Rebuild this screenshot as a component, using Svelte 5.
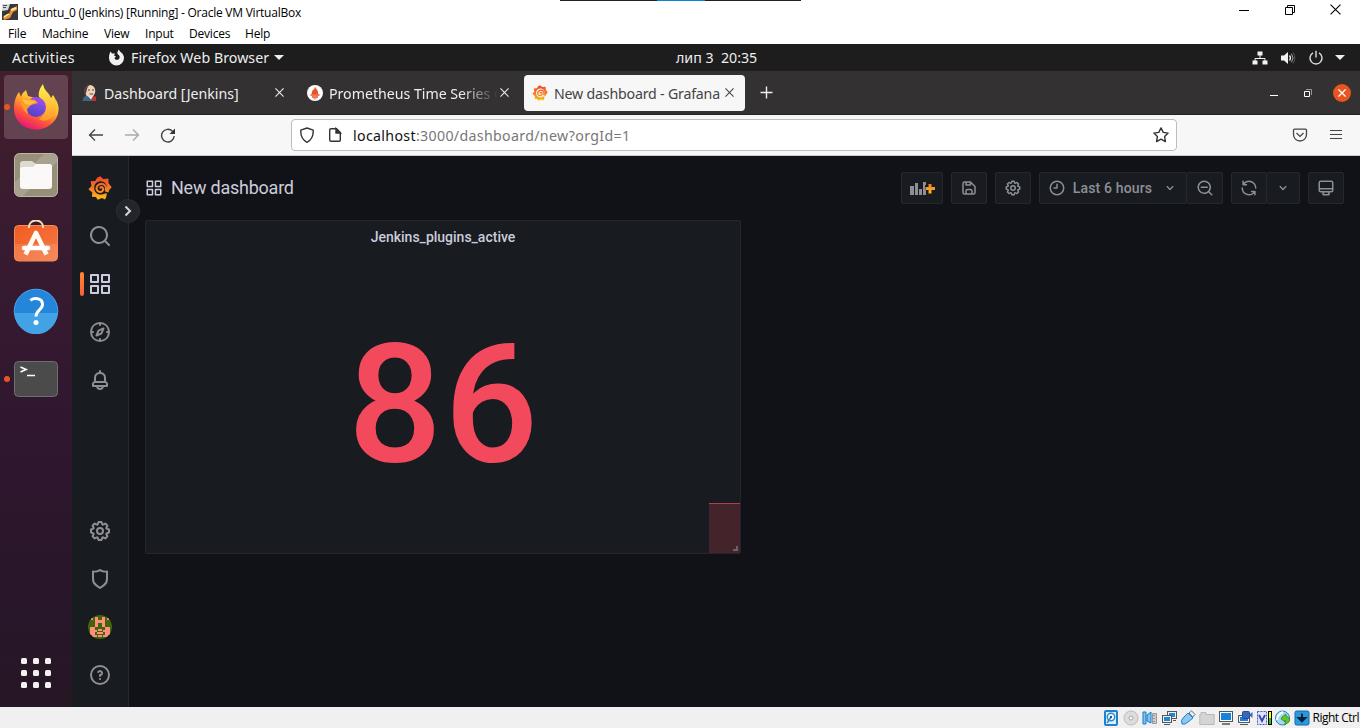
<script>
  const P = {
    search: 'M21.71,20.29,18,16.61A9,9,0,1,0,16.61,18l3.68,3.68a1,1,0,0,0,1.42,0A1,1,0,0,0,21.71,20.29ZM11,18a7,7,0,1,1,7-7A7,7,0,0,1,11,18Z',
    apps: 'M10,13H3a1,1,0,0,0-1,1v7a1,1,0,0,0,1,1h7a1,1,0,0,0,1-1V14A1,1,0,0,0,10,13ZM9,20H4V15H9ZM21,2H14a1,1,0,0,0-1,1v7a1,1,0,0,0,1,1h7a1,1,0,0,0,1-1V3A1,1,0,0,0,21,2ZM20,9H15V4h5Zm1,4H14a1,1,0,0,0-1,1v7a1,1,0,0,0,1,1h7a1,1,0,0,0,1-1V14A1,1,0,0,0,21,13Zm-1,7H15V15h5ZM10,2H3A1,1,0,0,0,2,3v7a1,1,0,0,0,1,1h7a1,1,0,0,0,1-1V3A1,1,0,0,0,10,2ZM9,9H4V4H9Z',
    compass: 'M12,2A10,10,0,1,0,22,12,10,10,0,0,0,12,2Zm1,17.93V19a1,1,0,0,0-2,0v.93A8,8,0,0,1,4.07,13H5a1,1,0,0,0,0-2H4.07A8,8,0,0,1,11,4.07V5a1,1,0,0,0,2,0V4.07A8,8,0,0,1,19.93,11H19a1,1,0,0,0,0,2h.93A8,8,0,0,1,13,19.93ZM15.14,7.55l-5,2.12a1,1,0,0,0-.52.52l-2.12,5a1,1,0,0,0,.21,1.1,1,1,0,0,0,.7.3.93.93,0,0,0,.4-.09l5-2.12a1,1,0,0,0,.52-.52l2.12-5a1,1,0,0,0-1.31-1.31Zm-2.49,5.1-2.28,1,1-2.28,2.28-1Z',
    bell: 'M18,13.18V10a6,6,0,0,0-5-5.91V3a1,1,0,0,0-2,0V4.09A6,6,0,0,0,6,10v3.18A3,3,0,0,0,4,16v2a1,1,0,0,0,1,1H8.14a4,4,0,0,0,7.72,0H19a1,1,0,0,0,1-1V16A3,3,0,0,0,18,13.18ZM8,10a4,4,0,0,1,8,0v3H8Zm4,10a2,2,0,0,1-1.72-1h3.44A2,2,0,0,1,12,20Zm6-3H6V16a1,1,0,0,1,1-1H17a1,1,0,0,1,1,1Z',
    cog: 'M21.32,9.55l-1.89-.63.89-1.78A1,1,0,0,0,20.13,6L18,3.87a1,1,0,0,0-1.15-.19l-1.78.89-.63-1.89A1,1,0,0,0,13.5,2h-3a1,1,0,0,0-.95.68L8.92,4.57,7.14,3.68A1,1,0,0,0,6,3.87L3.87,6a1,1,0,0,0-.19,1.15l.89,1.78-1.89.63A1,1,0,0,0,2,10.5v3a1,1,0,0,0,.68.95l1.89.63-.89,1.78A1,1,0,0,0,3.87,18L6,20.13a1,1,0,0,0,1.15.19l1.78-.89.63,1.89a1,1,0,0,0,.95.68h3a1,1,0,0,0,.95-.68l.63-1.89,1.78.89A1,1,0,0,0,18,20.13L20.13,18a1,1,0,0,0,.19-1.15l-.89-1.78,1.89-.63A1,1,0,0,0,22,13.5v-3A1,1,0,0,0,21.32,9.55ZM20,12.78l-1.2.4A2,2,0,0,0,17.64,16l.57,1.14-1.1,1.1L16,17.64a2,2,0,0,0-2.79,1.16l-.4,1.2H11.22l-.4-1.2A2,2,0,0,0,8,17.64l-1.14.57-1.1-1.1L6.36,16A2,2,0,0,0,5.2,13.18L4,12.78V11.22l1.2-.4A2,2,0,0,0,6.36,8L5.79,6.89l1.1-1.1L8,6.36A2,2,0,0,0,10.82,5.2l.4-1.2h1.56l.4,1.2A2,2,0,0,0,16,6.36l1.14-.57,1.1,1.1L17.64,8a2,2,0,0,0,1.16,2.79l1.2.4ZM12,8a4,4,0,1,0,4,4A4,4,0,0,0,12,8Zm0,6a2,2,0,1,1,2-2A2,2,0,0,1,12,14Z',
    shield: 'M19.63,3.65a1,1,0,0,0-.84-.2,8,8,0,0,1-6.22-1.27,1,1,0,0,0-1.14,0A8,8,0,0,1,5.21,3.45a1,1,0,0,0-.84.2A1,1,0,0,0,4,4.43v7.45a9,9,0,0,0,3.77,7.33l3.65,2.6a1,1,0,0,0,1.16,0l3.65-2.6A9,9,0,0,0,20,11.88V4.43A1,1,0,0,0,19.63,3.65ZM18,11.88a7,7,0,0,1-2.93,5.7L12,19.77,8.93,17.58A7,7,0,0,1,6,11.88V5.58a10,10,0,0,0,6-1.39,10,10,0,0,0,6,1.39Z',
    help: 'M11.29,15.29a1.58,1.58,0,0,0-.12.15.76.76,0,0,0-.09.18.64.64,0,0,0-.06.18,1.36,1.36,0,0,0,0,.2.84.84,0,0,0,.08.38.9.9,0,0,0,.54.54.94.94,0,0,0,.76,0,.9.9,0,0,0,.54-.54A1,1,0,0,0,13,16a1,1,0,0,0-.29-.71A1,1,0,0,0,11.29,15.29ZM12,2A10,10,0,1,0,22,12,10,10,0,0,0,12,2Zm0,18a8,8,0,1,1,8-8A8,8,0,0,1,12,20ZM12,7A3,3,0,0,0,9.4,8.5a1,1,0,1,0,1.73,1A1,1,0,0,1,12,9a1,1,0,0,1,0,2,1,1,0,0,0-1,1v1a1,1,0,0,0,2,0v-.18A3,3,0,0,0,12,7Z',
    save: 'M20.71,9.29l-6-6a1,1,0,0,0-.32-.21A1.09,1.09,0,0,0,14,3H6A3,3,0,0,0,3,6V18a3,3,0,0,0,3,3H18a3,3,0,0,0,3-3V10A1,1,0,0,0,20.71,9.29ZM9,5h4V7H9Zm6,14H9V16a1,1,0,0,1,1-1h4a1,1,0,0,1,1,1Zm4-1a1,1,0,0,1-1,1H17V16a3,3,0,0,0-3-3H10a3,3,0,0,0-3,3v3H6a1,1,0,0,1-1-1V6A1,1,0,0,1,6,5H7V8A1,1,0,0,0,8,9h6a1,1,0,0,0,1-1V6.41l4,4Z',
    clock: 'M12,2A10,10,0,1,0,22,12,10,10,0,0,0,12,2Zm0,18a8,8,0,1,1,8-8A8,8,0,0,1,12,20ZM12,6a1,1,0,0,0-1,1v4H8a1,1,0,0,0,0,2h4a1,1,0,0,0,1-1V7A1,1,0,0,0,12,6Z',
    down: 'M17,9.17a1,1,0,0,0-1.41,0L12,12.71,8.46,9.17a1,1,0,0,0-1.41,0,1,1,0,0,0,0,1.42l4.24,4.24a1,1,0,0,0,1.42,0L17,10.59A1,1,0,0,0,17,9.17Z',
    zoomout: 'M21.71,20.29,18,16.61A9,9,0,1,0,16.61,18l3.68,3.68a1,1,0,0,0,1.42,0A1,1,0,0,0,21.71,20.29ZM11,18a7,7,0,1,1,7-7A7,7,0,0,1,11,18ZM15,10H7a1,1,0,0,0,0,2h8a1,1,0,0,0,0-2Z',
    sync: 'M19.91,15.51H15.38a1,1,0,0,0,0,2h2.4A8,8,0,0,1,4,12a1,1,0,0,0-2,0,10,10,0,0,0,16.88,7.23V21a1,1,0,0,0,2,0V16.5A1,1,0,0,0,19.91,15.51ZM12,2A10,10,0,0,0,5.12,4.77V3a1,1,0,0,0-2,0V7.5a1,1,0,0,0,1,1h4.5a1,1,0,0,0,0-2H6.22A8,8,0,0,1,20,12a1,1,0,0,0,2,0A10,10,0,0,0,12,2Z',
    monitor: 'M19,2H5A3,3,0,0,0,2,5V15a3,3,0,0,0,3,3H7.64l-.58,1a2,2,0,0,0,0,2,2,2,0,0,0,1.75,1h6.46A2,2,0,0,0,17,21a2,2,0,0,0,0-2l-.59-1H19a3,3,0,0,0,3-3V5A3,3,0,0,0,19,2ZM8.77,20,10,18H14l1.2,2ZM20,15a1,1,0,0,1-1,1H5a1,1,0,0,1-1-1V14H20Zm0-3H4V5A1,1,0,0,1,5,4H19a1,1,0,0,1,1,1Z'
  };
  const dots = [0, 1, 2, 3, 4, 5, 6, 7, 8];
</script>

{#snippet icon(d, size)}
  <svg width={size} height={size} viewBox="0 0 24 24" fill="currentColor"><path {d} /></svg>
{/snippet}

{#snippet grafana(size)}
  <svg width={size} height={size} viewBox="0 0 24 24">
    <defs><linearGradient id="gg{size}" gradientUnits="userSpaceOnUse" x1="12" y1="0" x2="12" y2="24"><stop offset="0.1" stop-color="#f04e28" /><stop offset="0.55" stop-color="#f67f25" /><stop offset="1" stop-color="#fcc40f" /></linearGradient></defs>
    <path fill="url(#gg{size})" d="M12.3.3 15.2 3.1 20.4 2.5 20.6 7.2 23.7 11.2 21 14.2 20.5 16.4 17.5 15.4C20 12.200 19 7.600 15.600 5.900 11.500 3.900 6.600 6.400 6.200 11.200 5.800 15.900 9.500 19.200 14 18.500L18.600 17 18.700 19.500 17.100 23.400 13.900 21.900 9.700 23.800 8 20.900 3.900 20.700 4.300 16.500.400 13.200 3.500 10.100 2.600 5.300 7.300 5 9.100 1.800Z" />
    <path fill="none" stroke="url(#gg{size})" stroke-width="2.100" stroke-linecap="round" d="M17.8 14.500C19 10.500 16.300 7.800 13.200 7.900 9.800 8 7.900 11 8.800 13.700 9.700 16.500 13.700 16.800 15 14.200 16 12.100 13.800 10.300 12.300 11.600" />
  </svg>
{/snippet}

{#snippet cross(size, w)}
  <svg width={size} height={size} viewBox="0 0 10 10" fill="none" stroke="currentColor" stroke-width={w}><path d="M.5.5 9.500 9.500M9.500.5.5 9.500" /></svg>
{/snippet}

<div class="screen">
  <div class="titlebar">
    <svg width="16" height="16" viewBox="0 0 16 16"><rect width="16" height="16" fill="#35383c" /><path d="M0 0H8L6 6 0 7Z" fill="#d8d8d8" /><path d="M1 1.500H5M1 3.500H4" stroke="#34536d" /><path d="M1 13 6 12 9 5 15 2V6L11 8 8 14 2 16Z" fill="#ef8e23" /><path d="M2 13 7 10M9 6 14 4" stroke="#ffe2a0" stroke-width="2" /></svg>
    <span class="title">Ubuntu_0 (Jenkins) [Running] - Oracle VM VirtualBox</span>
    <div class="minibar"><i></i></div>
    <div class="wincontrols">
      <svg width="12" height="12" viewBox="0 0 12 12" stroke="#000"><path d="M1 6.500H11" /></svg>
      <svg width="12" height="12" viewBox="0 0 12 12" stroke="#000" fill="none"><path d="M1.500 3.500h7v7h-7zM3.500 3.500v-2h7v7h-2" /></svg>
      {@render cross(11, 1)}
    </div>
  </div>
  <div class="menubar">
    <span>File</span><span>Machine</span><span>View</span><span>Input</span><span>Devices</span><span>Help</span>
  </div>

  <div class="topbar">
    <span class="act">Activities</span>
    <svg class="fxmono" width="17" height="17" viewBox="0 0 17 17"><path fill="#f1f1f1" d="M8.500 16.500A7.500 7.500 0 0 1 1 9C1 6.500 1.500 4.500 2.500 2.500L4 4.500 7 4.500 6 6.500 8 7.500 6.500 9C7 11 9.500 11.500 11 10 12.500 8 11.500 6 9.500 5 9 3 10 1.500 11 .5 11.500 3 13 3 14 4 15.500 6 16 7.500 16 9A7.500 7.500 0 0 1 8.500 16.500Z" /></svg>
    <span class="app">Firefox Web Browser</span>
    <i class="tri"></i>
    <span class="clock">лип 3&nbsp; 20:35</span>
    <div class="tray">
      <svg width="16" height="16" viewBox="0 0 16 16" fill="#f2f2f2"><path d="M5.500 1.500h5v4h-5zM.5 10.500h5v4h-5zM10.500 10.500h5v4h-5z" /><path d="M8 5v3M3 11V8.500h10V11" fill="none" stroke="#f2f2f2" /></svg>
      <svg width="16" height="16" viewBox="0 0 16 16"><path d="M1 5.500H4L8 2V14L4 10.500H1Z" fill="#f2f2f2" /><path d="M9.500 5.500Q11.500 8 9.500 10.500" stroke="#f2f2f2" fill="none" stroke-width="1.300" /><path d="M11.500 3.800Q14.500 8 11.500 12.200" stroke="#aaa" fill="none" /><path d="M13.200 2.500Q16.500 8 13.200 13.500" stroke="#555" fill="none" /></svg>
      <svg width="16" height="16" viewBox="0 0 16 16" fill="none" stroke="#ddd" stroke-width="1.400"><path d="M8 .8V7.500M5 2.800A6 6 0 1 0 11 2.800" /></svg>
      <i class="tri"></i>
    </div>
  </div>

  <div class="desktop">
    <div class="dock">
      <div class="slot active">
        <i class="run"></i>
        <svg width="48" height="48" viewBox="0 0 48 48">
          <defs>
            <linearGradient id="fa" x1=".8" y1=".1" x2=".3" y2="1"><stop offset="0" stop-color="#fff04a" /><stop offset=".35" stop-color="#ffb52e" /><stop offset=".65" stop-color="#ff5a36" /><stop offset="1" stop-color="#e8117c" /></linearGradient>
            <linearGradient id="fb" x1=".8" y1="0" x2=".4" y2="1"><stop offset="0" stop-color="#a850f0" /><stop offset="1" stop-color="#4b42c8" /></linearGradient>
            <linearGradient id="fc" x1="0" y1="0" x2="0" y2="1"><stop offset="0" stop-color="#fff44f" /><stop offset="1" stop-color="#ff9a2a" /></linearGradient>
          </defs>
          <path fill="url(#fa)" d="M24 46.500C11 46.500 2 37 2 25.500 2 18 4 13 7 9L9 14C10 10 12 9 14 7L16 13 27 16 44 17C46 21 47 24 46.500 27 46 38 36 46.500 24 46.500Z" />
          <path fill="url(#fc)" d="M27 14C26 9 28 5 31 1 32 8 37 9 39 15L41 12C46 19 46 26 42 32 38 38 31 39 27 36 34 32 36 24 31 18Z" />
          <circle cx="24" cy="24" r="10" fill="url(#fb)" />
          <path fill="#ff9b2a" d="M8 15 14 15.500 23 17 26 20 19 22 15 26 16 31C11 28 9 22 8 15Z" />
          <path fill="#ffc043" d="M10 16 24 18.500 18 22 13 21Z" />
        </svg>
      </div>
      <div class="slot">
        <svg width="46" height="46" viewBox="0 0 46 46"><rect x="1.500" y="1.500" width="43" height="43" rx="5" fill="#979079" stroke="#bdb8a4" /><path d="M2 30 31 2H40A4 4 0 0 1 44 6V10L10 44H6A4 4 0 0 1 2 40Z" fill="#a7a28f" /><path d="M7 12Q7 9 10 9H19L23 12H36Q39 12 39 15V18H7Z" fill="#dedacf" /><path d="M7 18Q7 15 10 15H20L23 12H36Q39 12 39 15V34Q39 37 36 37H10Q7 37 7 34Z" fill="#faf9f8" /></svg>
      </div>
      <div class="slot">
        <svg width="46" height="46" viewBox="0 3 46 46"><defs><linearGradient id="so" x1="0" y1="0" x2="1" y2="1"><stop offset="0" stop-color="#f25c22" /><stop offset="1" stop-color="#f37a45" /></linearGradient></defs><rect x="1.500" y="8.500" width="43" height="35.500" rx="4" fill="url(#so)" stroke="#f68a58" /><path d="M2 27H44V40Q44 43.500 40 43.500H6Q2 43.500 2 40Z" fill="#fff" opacity=".12" /><path d="M16 11C15 1 31 1 30 11" fill="none" stroke="#f4e0b6" stroke-width="2" /><path d="M12.500 37.500 23 16 33.500 37.500" fill="none" stroke="#fffaf3" stroke-width="4.600" stroke-linejoin="round" /><path d="M11 31H35" stroke="#fff" stroke-width="4.500" stroke-linecap="round" /></svg>
      </div>
      <div class="slot">
        <svg width="46" height="46" viewBox="0 0 46 46"><circle cx="23" cy="23" r="21.800" fill="#2486db" stroke="#4aa2e8" /><path d="M1.700 25H44.300A21.300 21.300 0 0 1 1.700 25Z" fill="#43a2e5" /><path d="M17.500 12.500C20 9.500 30 9.500 29.500 17 29 22 23 22 23 28.500" fill="none" stroke="#fff" stroke-width="3" /><circle cx="23" cy="34.500" r="2.500" fill="#fff" /></svg>
      </div>
      <div class="slot">
        <i class="run"></i>
        <svg width="46" height="46" viewBox="0 0 46 46"><rect x="1.500" y="5.500" width="43" height="35" rx="4" fill="#4b4b4b" stroke="#6f6f6f" /><path d="M7.500 11 13 13.500 7.500 16M14 19.500H22" fill="none" stroke="#fff" stroke-width="1.700" /></svg>
      </div>
      <div class="grid9">{#each dots as d (d)}<i></i>{/each}</div>
    </div>

    <div class="browser">
      <div class="tabs">
        <div class="tab">
          <svg width="16" height="17" viewBox="0 0 16 17"><path d="M.5 17Q1 12 5 11.500H11Q15 13 14 17Z" fill="#3f6683" /><path d="M9.500 13 14 12.500V17H11Z" fill="#c9302a" /><path d="M6 12 9 15.500 11 12Z" fill="#f2f2f2" /><ellipse cx="8" cy="7" rx="5.300" ry="6" fill="#efd4bb" /><path d="M2.800 10C.8 4 3.500 .5 8.500 .5 5 2 5.200 5 4 9.500Z" fill="#54433c" /><path d="M6 6H8M10 6H12M7.500 10H11" stroke="#6b3f37" /></svg>
          <span class="t1">Dashboard [Jenkins]</span>{@render cross(9, 1.2)}
        </div>
        <div class="tab">
          <svg width="16" height="16" viewBox="0 0 16 16"><circle cx="8" cy="8" r="8" fill="#fff" /><path d="M8 1.500C9 4 12 6 11 9.500H5C4 7 6 6 6 4L7 5Z" fill="#e6522c" /><path d="M3.500 10H12.500M5 12H11" stroke="#e6522c" stroke-width="1.500" /><path d="M6 13.500H10Q8 15.500 6 13.500Z" fill="#e6522c" /></svg>
          <span class="t2">Prometheus Time Series C</span>{@render cross(9, 1.2)}
        </div>
        <div class="tab on">
          {@render grafana(16)}
          <span class="t3">New dashboard - Grafana</span>{@render cross(9, 1.2)}
        </div>
        <svg class="plus" width="13" height="13" viewBox="0 0 13 13"><path d="M6.500.5V12.500M.5 6.500H12.500" stroke="#eee" stroke-width="1.400" /></svg>
        <div class="ffctl">
          <svg width="10" height="10" viewBox="0 0 10 10"><path d="M1 7.500H9" stroke="#fff" /></svg>
          <svg width="10" height="10" viewBox="0 0 10 10" fill="none"><path d="M1.500 3.500h5v5h-5z" stroke="#fff" /><path d="M3 1.500H8.500V7" stroke="#999" /></svg>
          <b>{@render cross(8, 1.6)}</b>
        </div>
      </div>
      <div class="nav">
        <svg width="16" height="16" viewBox="0 0 16 16" fill="none" stroke="#444" stroke-width="1.300"><path d="M15 8H1.500M7 2.500 1.500 8 7 13.500" /></svg>
        <svg width="16" height="16" viewBox="0 0 16 16" fill="none" stroke="#aaa" stroke-width="1.300"><path d="M1 8H14.500M9 2.500 14.500 8 9 13.500" /></svg>
        <svg width="16" height="16" viewBox="0 0 16 16" fill="none" stroke="#444" stroke-width="1.400"><path d="M14.200 9A6.300 6.300 0 1 1 12.500 4.300" /><path d="M15 1.500V7H9.500Z" fill="#333" stroke="none" /></svg>
        <div class="url">
          <svg width="16" height="16" viewBox="0 0 16 16" fill="none" stroke="#333" stroke-width="1.400"><path d="M8 1 14.200 3.200C14.500 9 12.500 13 8 15.300 3.500 13 1.500 9 1.800 3.200Z" stroke-linejoin="round" /></svg>
          <svg width="14" height="16" viewBox="0 0 14 16" fill="none" stroke="#333" stroke-width="1.400"><path d="M3 1.700H8.500L12.300 5.500V13.300Q12.300 14.300 11.300 14.300H3Q1.700 14.300 1.700 13V3Q1.700 1.700 3 1.700Z" /><path d="M8 1.500V6H12.500Z" fill="#333" /></svg>
          <span><b>localhost</b>:3000/dashboard/new?orgId=1</span>
          <svg class="star" width="16" height="16" viewBox="0 0 16 16" fill="none" stroke="#333" stroke-width="1.400" stroke-linejoin="round"><path d="M8 .9 10.200 5.400 15.100 6.100 11.600 9.600 12.400 14.600 8 12.200 3.600 14.600 4.400 9.600.9 6.100 5.800 5.400Z" /></svg>
        </div>
        <svg class="pocket" width="16" height="16" viewBox="0 0 16 16" fill="none" stroke="#444" stroke-width="1.300"><path d="M2.500 2.200H13.500Q14.500 2.200 14.500 3.200V7.500A6.500 6.500 0 0 1 1.500 7.500V3.200Q1.500 2.200 2.500 2.200Z" /><path d="M4.500 6 8 9.400 11.500 6" /></svg>
        <svg width="14" height="14" viewBox="0 0 14 14" stroke="#444" stroke-width="1.200"><path d="M1 2.500H13M1 6.500H13M1 10.500H13" /></svg>
      </div>

      <div class="grafana">
        <div class="side">
          <div>{@render grafana(24)}</div>
          <div>{@render icon(P.search, 24)}</div>
          <div class="sel">{@render icon(P.apps, 24)}</div>
          <div>{@render icon(P.compass, 24)}</div>
          <div>{@render icon(P.bell, 24)}</div>
          <div class="push">{@render icon(P.cog, 24)}</div>
          <div>{@render icon(P.shield, 24)}</div>
          <div>
            <svg class="ava" width="24" height="24" viewBox="0 0 24 24" shape-rendering="crispEdges"><rect width="24" height="24" fill="#3f6609" /><path fill="#ff8e7e" d="M7 2h3v3h4V2h3v10h-3V8h-4v4H7zM3 3h2v2H3zM19 3h2v2h-2zM2 12h5v3h2v2H7v3h2v2H4v-2H2zM22 12h-5v3h-2v2h2v3h-2v2h5v-2h2zM10 14h4v2h-4zM9 17h6v2H9zM10 20h4v2h-4z" /></svg>
          </div>
          <div>{@render icon(P.help, 24)}</div>
          <button class="expand" aria-label="Expand"><svg width="8" height="12" viewBox="0 0 8 12" fill="none" stroke="#d5d5de" stroke-width="2"><path d="M1.500 1.500 6 6 1.500 10.500" /></svg></button>
        </div>
        <main>
          <header>
            <i class="hicon">{@render icon(P.apps, 18)}</i>
            <h1>New dashboard</h1>
            <div class="tools">
              <div class="btn add"><svg width="26" height="16" viewBox="0 0 26 16"><path fill="#8e8e99" d="M1 6h4v9H1zM6 3h3v12H6zM10 9h3v6h-3zM14 2h3v3h-1v5h1v5h-3z" /><defs><linearGradient id="pl" x1="0" y1="0" x2="0" y2="1"><stop offset="0" stop-color="#f37a2c" /><stop offset="1" stop-color="#f9bd1c" /></linearGradient></defs><path fill="url(#pl)" d="M19.500 4h3v3H26v3h-3.500v3.500h-3V10H16.500V7h3z" /></svg></div>
              <div class="btn w36">{@render icon(P.save, 18)}</div>
              <div class="btn w36">{@render icon(P.cog, 18)}</div>
              <div class="group">
                <div class="btn time">{@render icon(P.clock, 18)}<span>Last 6 hours</span>{@render icon(P.down, 16)}</div>
                <div class="btn w36">{@render icon(P.zoomout, 18)}</div>
              </div>
              <div class="group">
                <div class="btn w36">{@render icon(P.sync, 18)}</div>
                <div class="btn w33">{@render icon(P.down, 16)}</div>
              </div>
              <div class="btn w36">{@render icon(P.monitor, 18)}</div>
            </div>
          </header>
          <section class="panel">
            <h2>Jenkins_plugins_active</h2>
            <div class="value">86</div>
            <div class="spark"></div>
            <i class="resize"></i>
          </section>
        </main>
      </div>
    </div>
  </div>

  <div class="status">
    <svg width="16" height="16" viewBox="0 0 16 16"><rect x="2" y="1" width="12" height="14" rx="1" fill="#ddeefa" stroke="#1f82cc" stroke-width="2" /><circle cx="8" cy="7" r="3.700" fill="#fff" stroke="#2a8bd2" stroke-width="1.500" /><path d="M8 7 4 13" stroke="#2a8bd2" stroke-width="1.500" /><circle cx="8" cy="7" r="1.200" fill="#258" /></svg>
    <svg width="16" height="16" viewBox="0 0 16 16"><circle cx="8" cy="8" r="7" fill="#dcdcdc" stroke="#bbb" /><circle cx="8" cy="8" r="2" fill="#f5f5f5" stroke="#aaa" /></svg>
    <svg width="16" height="16" viewBox="0 0 16 16"><path d="M1 2h3v12H1zM5 5 9 2V13L5 11Z" fill="#7cc4f2" stroke="#1e78c0" /><path d="M10.500 3.500h4v10h-4zM10 5.500h3M10 8.500h3M10 11.500h3" fill="#ccc" stroke="#999" /></svg>
    <svg width="16" height="16" viewBox="0 0 16 16" stroke="#555"><rect x="6.500" y="1.500" width="9" height="7" fill="#1b88dc" /><rect x="7.500" y="2.500" width="7" height="5" fill="none" stroke="#eee" /><path d="M12 10.500h3" /><rect x="1.500" y="5.500" width="9" height="7" fill="#1b88dc" /><rect x="2.500" y="6.500" width="7" height="5" fill="none" stroke="#eee" /><path d="M3 14.500h6" /></svg>
    <svg width="16" height="16" viewBox="0 0 16 16"><path d="M2 14Q0 10 4 7L8 3 13 8 8 12Q5 15 2 14Z" fill="#8cc8f1" stroke="#2383c5" /><path d="M9 3 11.500.8 15 4.500 12.800 7Z" fill="#eee" stroke="#678" /></svg>
    <svg width="16" height="16" viewBox="0 0 16 16"><path d="M.8 4.500H2V2.500H7V4.500H15.200V14.500H.8Z" fill="#d4d4d4" stroke="#b8b8b8" /></svg>
    <svg width="16" height="16" viewBox="0 0 16 16"><rect x="1.500" y="1.500" width="13" height="10" fill="#1583df" stroke="#555" /><rect x="2.500" y="2.500" width="11" height="8" fill="none" stroke="#fff" /><path d="M4 14h8" stroke="#555" stroke-width="1.500" /></svg>
    <svg width="16" height="16" viewBox="0 0 16 16"><path d="M1.500 5.500h11v7h-11z" fill="#1583df" stroke="#555" /><path d="M2.500 6.500h9v5h-9z" fill="none" stroke="#fff" /><path d="M3 14.500h8" stroke="#555" /><rect x="5.500" y="1.500" width="7" height="7" rx="1" fill="#3c65bd" stroke="#244990" /><path d="M12 5 15.500 2V8Z" fill="#3c65bd" /></svg>
    <svg width="16" height="16" viewBox="0 0 16 16"><rect x="1.500" y="1.500" width="9" height="13" fill="#dde3ff" stroke="#4b58bb" stroke-dasharray="2 1" /><path d="M3 5 6 11 9 5" fill="none" stroke="#3a45ab" stroke-width="1.800" /><path d="M12 1h4v14h-4z" fill="#000" /><path d="M13 2h2v6h-2z" fill="#ff0" /><path d="M13 8h2v6h-2z" fill="#1ec51e" /></svg>
    <svg width="16" height="16" viewBox="0 0 16 16"><circle cx="7.500" cy="8" r="7" fill="#a4d6f6" stroke="#2384c7" /><path d="M2 10Q2 5 8 2" stroke="#fff" stroke-width="2" fill="none" /><path d="M7 7 11 4V6Q16 8 14 12L9 15Q12 11 10 10V12L6 9Z" fill="#62c52a" stroke="#31801a" stroke-width=".7" /></svg>
    <svg width="16" height="16" viewBox="0 0 16 16"><rect x="1" y="1" width="14" height="14" rx="1.500" fill="#2a9ade" stroke="#0f6ba9" /><path d="M8 3.500V8M4.500 8 8 11.500 11.500 8Z" fill="#0c2238" stroke="#0c2238" stroke-width="1.800" /></svg>
    <span>Right Ctrl</span>
  </div>
</div>

<style>
  :global(body) { margin: 0; overflow: hidden; }
  * { box-sizing: border-box; }
  svg { display: block; flex: none; }
  i { font-style: normal; }
  .screen { width: 1360px; height: 728px; display: flex; flex-direction: column; background: #fff; white-space: nowrap; overflow: hidden; font-family: "Open Sans", sans-serif; }
  .titlebar { height: 24px; display: flex; align-items: center; padding: 0 19px 0 2px; font-size: 12px; color: #000; position: relative; flex: none; }
  .title { margin-left: 5px; letter-spacing: -0.24px; }
  .minibar { position: absolute; left: 560px; top: 0; width: 241px; height: 1px; background: #222; display: flex; justify-content: center; }
  .minibar i { width: 48px; height: 1px; background: #0a84d8; }
  .wincontrols { margin-left: auto; display: flex; gap: 34px; margin-top: -4px; }
  .menubar { height: 20px; display: grid; grid-template-columns: 34px 62px 41px 44px 56px auto; padding-left: 8px; font-size: 12px; line-height: 19px; color: #000; flex: none; letter-spacing: -0.2px; }
  .topbar { height: 27px; background: #1d1d1d; color: #eee; display: flex; align-items: center; padding-left: 12px; font-family: "Noto Sans", sans-serif; font-size: 14.200px; flex: none; }
  .act { width: 96px; letter-spacing: 0.38px; }
  .fxmono { margin-right: 6px; }
  .app { width: 143px; letter-spacing: 0.05px; }
  .tri { width: 0; height: 0; border: 5px solid transparent; border-top-color: #eee; border-bottom: 0; }
  .clock { margin-left: 392px; padding-bottom: 1px; }
  .tray { margin-left: auto; display: flex; align-items: center; gap: 12px; padding-right: 15px; }
  .tray .tri { margin-left: -1px; }
  .desktop { display: flex; height: 636px; flex: none; }
  .dock { width: 72px; padding: 4px; background: linear-gradient(#431e2d 0%, #391b30 25%, #30172f 55%, #28162a 85%, #261724 100%); display: flex; flex-direction: column; gap: 4px; flex: none; }
  .slot { height: 64px; border-radius: 4px; display: flex; align-items: center; justify-content: center; position: relative; flex: none; }
  .slot.active { background: #62434f; }
  .run { position: absolute; left: 0; top: 29px; width: 6px; height: 6px; border-radius: 50%; background: #e95420; }
  .grid9 { margin: auto auto 15px; display: grid; grid-template-columns: repeat(3, 6px); gap: 6px; }
  .grid9 i { width: 6px; height: 6px; border-radius: 1.500px; background: #f3f0f1; }
  .browser { width: 1288px; display: flex; flex-direction: column; }
  .tabs { height: 44px; background: #333131; border-bottom: 1px solid #242323; display: flex; align-items: center; gap: 4px; padding-left: 2px; font-family: "Noto Sans", sans-serif; font-size: 14.200px; color: #eee; flex: none; }
  .tab { width: 221px; height: 36px; padding: 0 11.500px 0 8px; display: flex; align-items: center; gap: 6px; border-radius: 4px; }
  .tab span { flex: 1; min-width: 0; overflow: hidden; padding-top: 1px; margin-right: -4px; }
  .t1 { letter-spacing: -0.03px; }
  .t2 { letter-spacing: -0.02px; -webkit-mask-image: linear-gradient(90deg, #000 78%, transparent); mask-image: linear-gradient(90deg, #000 78%, transparent); }
  .t3 { letter-spacing: -0.2px; }
  .tab.on { background: #f7f7f7; color: #444; }
  .plus { margin-left: 11px; }
  .ffctl { margin-left: auto; padding-right: 9px; display: flex; align-items: center; gap: 24px; }
  .ffctl b { width: 18px; height: 18px; border-radius: 50%; background: #e95420; color: #fff; display: flex; align-items: center; justify-content: center; margin-left: -4px; }
  .nav { height: 41px; background: #f7f7f7; border-bottom: 1px solid #ccc; display: flex; align-items: center; gap: 20px; padding: 0 17px 0 16px; flex: none; }
  .url { width: 886px; height: 32px; margin-left: 95px; border: 1px solid #bdbdbd; border-radius: 4px; background: #fff; display: flex; align-items: center; padding: 0 7px; font-family: "Noto Sans", sans-serif; font-size: 14.200px; color: #777; }
  .url span { margin-left: 11px; letter-spacing: 0.33px; }
  .url svg + svg { margin-left: 13px; }
  .url b { font-weight: 400; color: #111; }
  .star { margin-left: auto; }
  .pocket { margin-left: auto; margin-right: 1px; }
  .grafana { flex: 1; display: flex; background: #111217; font-family: Roboto, sans-serif; color: #ccccdc; }
  .side { width: 57px; background: #181b1f; border-right: 1px solid #27292e; padding: 8px 0; display: flex; flex-direction: column; color: #8e8e99; position: relative; }
  .side > div { height: 48px; display: flex; align-items: center; justify-content: center; position: relative; }
  .side .push { margin-top: auto; }
  .side .sel { color: #ccccdc; }
  .sel::before { content: ""; position: absolute; left: 8px; top: 12px; width: 4px; height: 24px; border-radius: 2px; background: linear-gradient(#ff8833, #f55f3e); }
  .ava { border-radius: 50%; }
  .expand { position: absolute; right: -12px; top: 43px; width: 24px; height: 24px; border-radius: 50%; border: 1px solid #2c2e34; background: #22252b; padding: 0 1px 0 0; display: flex; align-items: center; justify-content: center; }
  main { flex: 1; padding: 0 16px; display: flex; flex-direction: column; }
  header { height: 64px; display: flex; align-items: center; }
  .hicon { margin-right: 8px; }
  h1 { margin: 0; font-size: 18px; font-weight: 400; line-height: 22px; letter-spacing: -0.23px; }
  .tools { margin-left: auto; display: flex; gap: 8px; color: #8e8e99; }
  .btn { height: 32px; border: 1px solid #26282d; border-radius: 2px; background: #181b1f; display: flex; align-items: center; justify-content: center; }
  .add { width: 42px; }
  .w36 { width: 36px; }
  .w33 { width: 33px; }
  .group { display: flex; }
  .group .btn + .btn { border-left: 0; }
  .time { width: 148px; font-size: 14px; font-weight: 500; }
  .time span { margin: 0 10px 0 7px; letter-spacing: 0.15px; }
  .panel { width: 596px; height: 334px; border: 1px solid #24262b; border-radius: 2px; background: #181b1f; display: flex; flex-direction: column; position: relative; overflow: hidden; }
  h2 { margin: 0; height: 32px; line-height: 32px; text-align: center; font-size: 14px; font-weight: 500; }
  .value { flex: 1; display: flex; align-items: center; justify-content: center; padding: 3px 0 0 2px; font-size: 166px; line-height: 1; font-weight: 500; letter-spacing: 2px; color: #f2495c; }
  .spark { position: absolute; right: 0; bottom: 0; width: 31px; height: 50px; background: #45232b; border-top: 1px solid #b04050; }
  .resize { position: absolute; right: 2px; bottom: 2px; width: 5px; height: 5px; border-right: 2px solid #666; border-bottom: 2px solid #666; }
  .status { height: 21px; background: #f0f0f0; display: flex; align-items: center; justify-content: flex-end; gap: 3.100px; padding-right: 1px; font-size: 12px; color: #000; flex: none; }
  .status span { letter-spacing: -0.5px; margin-left: -1px; }
</style>
